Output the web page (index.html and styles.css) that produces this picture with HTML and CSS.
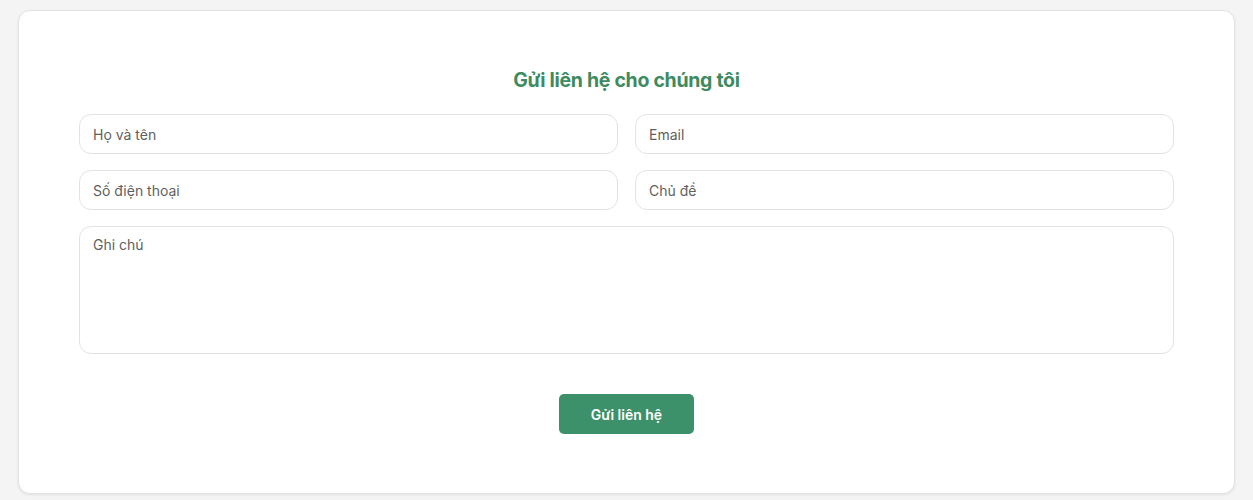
FILE: index.html
```html
<!DOCTYPE html>
<html lang="vi">
<head>
<meta charset="utf-8">
<link rel="stylesheet" href="styles.css">
</head>
<body>
<div class="card">
  <h2 class="title">Gửi liên hệ cho chúng tôi</h2>
  <form class="form">
    <div class="grid">
      <input class="field" type="text" placeholder="Họ và tên">
      <input class="field" type="text" placeholder="Email">
      <input class="field" type="text" placeholder="Số điện thoại">
      <input class="field" type="text" placeholder="Chủ đề">
      <textarea class="field area" placeholder="Ghi chú"></textarea>
    </div>
    <div class="actions">
      <button class="btn" type="button">Gửi liên hệ</button>
    </div>
  </form>
</div>
</body>
</html>
```
FILE: styles.css
```css
* { box-sizing: border-box; }
html, body { margin: 0; }
body {
  background: #f4f4f4;
  padding: 10px 18px 6px;
  font-family: "Inter", "Noto Sans", sans-serif;
}
.card {
  background: #fff;
  border: 1px solid #e2e2e2;
  border-radius: 12px;
  box-shadow: 0 1px 3px rgba(0,0,0,0.08);
  padding: 55px 60px 59px;
}
.title {
  margin: 0 0 20px;
  text-align: center;
  color: #3e8b5f;
  font-size: 19.5px;
  line-height: 28px;
  font-weight: 700;
  letter-spacing: -0.3px;
}
.grid {
  display: grid;
  grid-template-columns: 1fr 1fr;
  column-gap: 17px;
  row-gap: 16px;
}
.field {
  display: block;
  width: 100%;
  height: 40px;
  border: 1px solid #e3e3e3;
  border-radius: 12px;
  background: #fff;
  padding: 0 13px;
  font-family: inherit;
  font-size: 14px;
  color: #333;
  outline: none;
}
.field::placeholder { color: #5f5f5f; }
.area {
  grid-column: 1 / -1;
  height: 128px;
  padding: 8px 13px;
  resize: none;
  line-height: 20px;
}
.actions {
  display: flex;
  justify-content: center;
  margin-top: 40px;
}
.btn {
  width: 135px;
  height: 40px;
  border: none;
  border-radius: 5px;
  background: #3d916a;
  color: #fff;
  font-family: inherit;
  font-size: 14px;
  font-weight: 600;
}
```
